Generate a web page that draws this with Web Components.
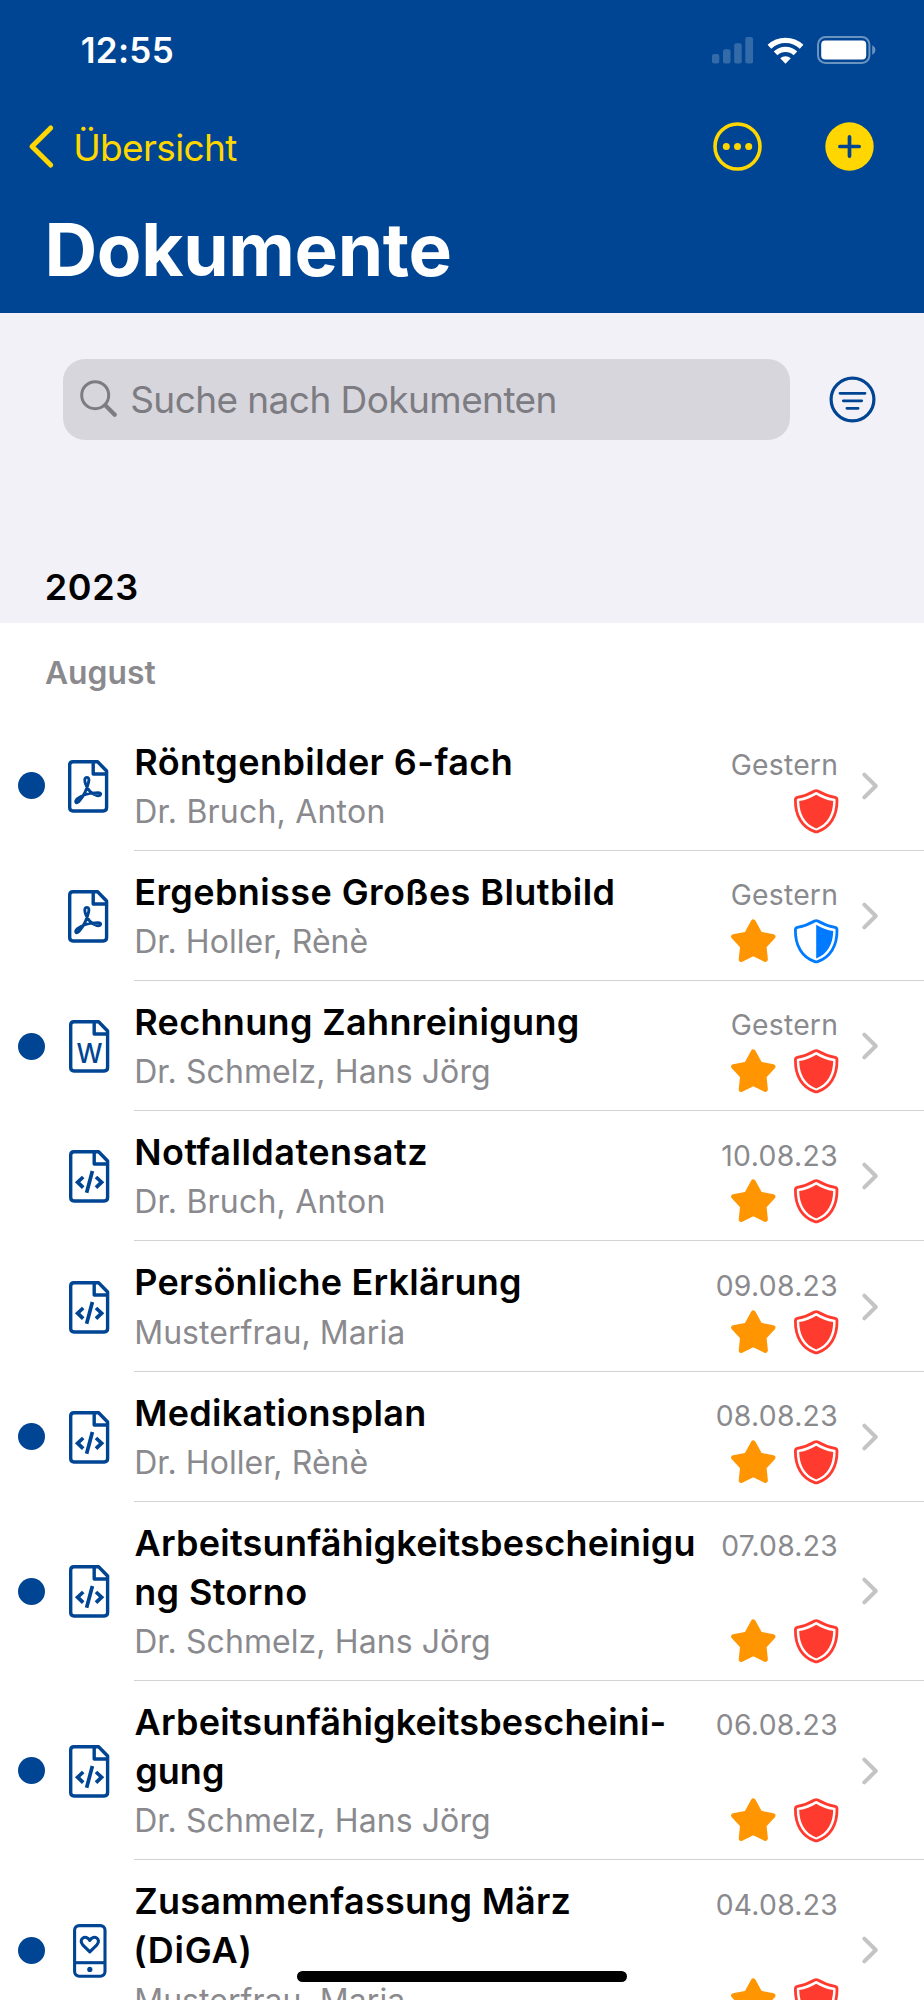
<!DOCTYPE html>
<html lang="de">
<head>
<meta charset="utf-8">
<title>Dokumente</title>
<style>
html,body{margin:0;height:2000px;overflow:hidden;background:#fff;font-family:Inter,"Liberation Sans",sans-serif}
</style>
</head>
<body>
<documents-app></documents-app>
<script>
/* Text whose box equals its visible ink: side bearings are trimmed and the
   tracking is chosen so that the ink spans the width given in "w". */
const canvas = document.createElement('canvas').getContext('2d');
class InkText extends HTMLElement {
  connectedCallback() {
    const size = +this.getAttribute('size'), weight = this.getAttribute('weight') || 400;
    const width = +this.getAttribute('w'), text = this.textContent;
    canvas.font = `${weight} ${size}px Inter, "Liberation Sans", sans-serif`;
    const m = canvas.measureText(text);
    const ink = m.actualBoundingBoxLeft + m.actualBoundingBoxRight;
    const track = width ? (width - ink) / (text.length - 1) : 0;
    const right = m.width - m.actualBoundingBoxRight + track;
    const left = text[0] === 'A' ? -1.6 : m.actualBoundingBoxLeft;
    this.attachShadow({mode: 'open'}).innerHTML = `<style>
      :host{display:block;width:max-content;white-space:pre;font-size:${size}px;font-weight:${weight};
        letter-spacing:${track.toFixed(3)}px;margin-left:${left.toFixed(2)}px;margin-right:${(-right).toFixed(2)}px}
      </style><slot></slot>`;
  }
}
customElements.define('ink-text', InkText);

const sheet = 'M5 1.7H29.6L38.6 11V47.6Q38.6 51 35.2 51H5Q1.7 51 1.7 47.6V5Q1.7 1.7 5 1.7ZM25.2 1.7V14H38.6';
const shieldEdge = 'M20.6 2Q22.2 1.1 23.8 2Q31.5 6.6 41 8.3Q43 8.8 43 10.8C43.3 27 36 38.6 23.6 42.6Q22.2 43.1 20.8 42.6C8.4 38.6 1.1 27 1.4 10.8Q1.4 8.8 3.4 8.3Q12.9 6.6 20.6 2Z';
const icons = {
  pdf: [41, 53, `<g fill="none" stroke="#004593" stroke-linejoin="round"><path stroke-width="3.4" d="${sheet}"/>
    <path stroke-width="2.9" d="M19 17.4C16 17.4 16.6 21 17.6 24C19.5 29.5 23.5 34 29 35.6C33.4 36.3 34 32.6 30 32.6C23 32.6 14.5 34.8 9.8 38.4C6 41.6 8.2 44.4 10.9 41.5C14.6 37.5 19 29 20.6 22.2C21.4 18.6 20.6 17.4 19 17.4Z"/></g>`],
  word: [41, 53, `<path fill="none" stroke="#004593" stroke-linejoin="round" stroke-width="3.4" d="${sheet}"/>
    <text x="20.4" y="43.2" text-anchor="middle" textLength="26" lengthAdjust="spacingAndGlyphs" font-family="Inter,sans-serif" font-size="26.5" font-weight="500" fill="#004593">W</text>`],
  code: [41, 53, `<g fill="none" stroke="#004593"><path stroke-linejoin="round" stroke-width="3.4" d="${sheet}"/>
    <path stroke-width="3.7" d="M14.2 27L8.6 32.2L14.2 37.6M27 27L32.6 32.2L27 37.6M23.4 21L17.6 42.8"/></g>`],
  phone: [34, 54, `<g fill="none" stroke="#004593" stroke-width="3.1"><rect x="1.6" y="1.6" width="30.4" height="50.6" rx="4.6"/><path d="M1.6 38.7H32"/>
    <path stroke-linejoin="round" d="M16.8 27.8L9.7 20.8C4.8 15.4 12.8 9.6 16.8 16.4C20.8 9.6 28.8 15.4 23.9 20.8Z"/></g><circle cx="16.8" cy="45.4" r="2.6" fill="#004593"/>`],
  star: [45, 44, `<path fill="#ff9500" stroke="#ff9500" stroke-width="5" stroke-linejoin="round" d="M22.3 2.9L29 15.1L42 17.6L33 27.3L34.4 40.4L22.3 34.6L10.2 40.4L11.6 27.3L2.6 17.6L15.6 15.1Z"/>`],
  shield: [45, 44.5, `<path fill="none" stroke="#ff3b30" stroke-width="2.8" d="${shieldEdge}"/><path fill="#ff3b30" d="M22.2 5.7Q30 10.5 39.2 12.1C39 25 33.5 35.4 22.2 39.4C10.9 35.4 5.4 25 5.2 12.1Q14.4 10.5 22.2 5.7Z"/>`],
  half: [45, 44.5, `<path fill="none" stroke="#007aff" stroke-width="2.8" d="${shieldEdge}"/><path fill="#007aff" d="M22.2 5.7Q30 10.5 39.2 12.1C39 25 33.5 35.4 22.2 39.4Z"/>`],
  chevron: [17, 28, `<path fill="none" stroke="#c4c4c6" stroke-width="4" stroke-linecap="round" stroke-linejoin="round" d="M2.3 2.6L13.8 14L2.3 25.4"/>`],
  back: [25, 43, `<path fill="none" stroke="#ffd600" stroke-width="5" stroke-linecap="round" stroke-linejoin="round" d="M21.7 3L3 21.5L21.7 40"/>`],
  more: [49, 49, `<circle cx="24.5" cy="24.5" r="22.5" fill="none" stroke="#ffd600" stroke-width="3.6"/><g fill="#ffd600"><circle cx="13.3" cy="24.5" r="3.5"/><circle cx="24.5" cy="24.5" r="3.5"/><circle cx="35.7" cy="24.5" r="3.5"/></g>`],
  plus: [49, 49, `<circle cx="24.5" cy="24.5" r="24.2" fill="#ffd600"/><path stroke="#004593" stroke-width="3.7" stroke-linecap="round" d="M14.9 24.5H34.1M24.5 14.9V34.1"/>`],
  filter: [47, 47, `<g fill="none" stroke="#004593"><circle cx="23.5" cy="23.5" r="21.4" stroke-width="3.2"/><path stroke-width="2.8" stroke-linecap="round" d="M11 17.3H36M14.3 24.8H32.7M17.9 32.3H29.1"/></g>`],
  search: [38, 38, `<g fill="none" stroke="#7c7c82"><circle cx="15.2" cy="15.2" r="13.5" stroke-width="3"/><path stroke-width="4.2" stroke-linecap="round" d="M25.3 25.3L34.7 34.7"/></g>`],
  signal: [42, 27, `<g fill="#fff" opacity=".2"><rect x="0" y="17" width="7.3" height="9.5" rx="2"/><rect x="11" y="12.2" width="7.5" height="14.3" rx="2"/><rect x="22.2" y="6.2" width="7.5" height="20.3" rx="2"/><rect x="33.3" y="0" width="7.7" height="26.5" rx="2"/></g>`],
  wifi: [37, 27, `<g fill="none" stroke="#fff" stroke-width="5.3"><path d="M2.4 9.8A23.6 23.6 0 0 1 34.6 9.8"/><path d="M8.6 16.3A14.4 14.4 0 0 1 28.4 16.3"/></g><path fill="#fff" d="M18.5 26.8L13.2 21.3A7.7 7.7 0 0 1 23.8 21.3Z"/>`],
  battery: [59, 28, `<g opacity=".42"><rect x="1" y="1" width="51.4" height="26" rx="7.5" fill="none" stroke="#fff" stroke-width="2"/><path fill="#fff" d="M55.2 9.3Q58.4 11 58.4 14T55.2 18.7Z"/></g><rect x="4.2" y="4.5" width="45" height="19" rx="4" fill="#fff"/>`]
};
class AppIcon extends HTMLElement {
  connectedCallback() {
    const [w, h, body] = icons[this.getAttribute('name')];
    this.attachShadow({mode: 'open'}).innerHTML = `<style>:host{display:block;flex:none;width:${w}px;height:${h}px}svg{display:block;overflow:visible}</style>
      <svg width="${w}" height="${h}" viewBox="0 0 ${w} ${h}">${body}</svg>`;
  }
}
customElements.define('app-icon', AppIcon);

class AppHeader extends HTMLElement {
  connectedCallback() {
    this.attachShadow({mode: 'open'}).innerHTML = `<style>
      :host{display:block;height:312.7px;background:#004593;color:#fff}
      div{display:flex;align-items:center;box-sizing:border-box}
      .status{height:100px;padding:0 47.6px 0 81.7px}
      .clock,.back{margin-right:auto}
      .status app-icon + app-icon{margin-left:13.2px}
      .nav{height:93px;padding:0 50.2px 0 28.8px;color:#ffd600}
      .back{gap:22.4px}
      .nav ink-text{padding-top:1px}
      .nav app-icon[name=plus]{margin-left:62.5px}
      .title{height:113px;padding-left:48.5px}
      </style>
      <div class="status"><span class="clock"><ink-text w="91" size="35" weight="600">12:55</ink-text></span><app-icon name="signal"></app-icon><app-icon name="wifi"></app-icon><app-icon name="battery"></app-icon></div>
      <div class="nav"><div class="back"><app-icon name="back"></app-icon><ink-text w="161" size="37">Übersicht</ink-text></div><app-icon name="more"></app-icon><app-icon name="plus"></app-icon></div>
      <div class="title"><ink-text w="401" size="73" weight="700">Dokumente</ink-text></div>`;
  }
}
customElements.define('app-header', AppHeader);

class SearchPanel extends HTMLElement {
  connectedCallback() {
    this.attachShadow({mode: 'open'}).innerHTML = `<style>
      :host{display:block;box-sizing:border-box;height:310px;padding:46.3px 48.5px 0 62.8px;background:#f2f1f7}
      .bar{display:flex;align-items:center;justify-content:space-between}
      .field{display:flex;align-items:center;box-sizing:border-box;width:727.4px;height:80.7px;border-radius:22px;background:#d7d6dc;color:#7c7c82;padding-left:17.2px;gap:14.2px}
      .year{margin:120px 0 0 -16px;line-height:54px;color:#000}
      </style>
      <div class="bar"><div class="field"><app-icon name="search"></app-icon><ink-text w="422.4" size="37">Suche nach Dokumenten</ink-text></div><app-icon name="filter"></app-icon></div>
      <div class="year"><ink-text w="90.4" size="36" weight="600">2023</ink-text></div>`;
  }
}
customElements.define('search-panel', SearchPanel);

class DocumentRow extends HTMLElement {
  connectedCallback() {
    const a = n => this.getAttribute(n);
    const badges = a('badges').split(' ').map(b => `<app-icon name="${b}"></app-icon>`).join('');
    this.attachShadow({mode: 'open'}).innerHTML = `<style>
      :host{display:flex}
      .lead{flex:none;display:flex;align-items:center;width:134px;box-sizing:border-box;padding-left:18px}
      .dot{width:27px;height:27px;border-radius:50%;background:${this.hasAttribute('unread') ? '#004593' : 'transparent'}}
      .kind{width:41px;margin-left:${a('icon') === 'pdf' ? 22.8 : 24}px;display:flex;justify-content:center;padding-top:1px}
      .body{flex:1;display:flex;border-bottom:1px solid #d3d3d6;box-sizing:border-box}
      .text{flex:1;padding:17px 0 13.1px 2.2px;color:#000}
      ::slotted([slot=title]){line-height:49.1px}
      ::slotted([slot=owner]){line-height:50px;color:#8a8a8e}
      .meta{display:flex;flex-direction:column;justify-content:space-between;align-items:flex-end;padding:25.3px 0 16.5px;color:#8a8a8e;line-height:38px}
      .date{padding-right:1.8px}
      .badges{display:flex;gap:18px;margin-right:-.8px}
      .go{align-self:center;margin:1px 45px 0 24px}
      </style>
      <div class="lead"><div class="dot"></div><div class="kind"><app-icon name="${a('icon')}"></app-icon></div></div>
      <div class="body"><div class="text"><slot name="title"></slot><slot name="owner"></slot></div>
      <div class="meta"><div class="date"><slot></slot></div><div class="badges">${badges}</div></div>
      <app-icon class="go" name="chevron"></app-icon></div>`;
  }
}
customElements.define('document-row', DocumentRow);

const owners = {'Dr. Bruch, Anton': 247.2, 'Dr. Holler, Rènè': 231.4, 'Dr. Schmelz, Hans Jörg': 352.8, 'Musterfrau, Maria': 267};
const documents = [
  ['pdf', 1, [['Röntgenbilder 6-fach', 374.6]], 'Dr. Bruch, Anton', 'Gestern', 104.5, 'shield'],
  ['pdf', 0, [['Ergebnisse Großes Blutbild', 477.3]], 'Dr. Holler, Rènè', 'Gestern', 104.5, 'star half'],
  ['word', 1, [['Rechnung Zahnreinigung', 441.6]], 'Dr. Schmelz, Hans Jörg', 'Gestern', 104.5, 'star shield'],
  ['code', 0, [['Notfalldatensatz', 290]], 'Dr. Bruch, Anton', '10.08.23', 114, 'star shield'],
  ['code', 0, [['Persönliche Erklärung', 383.8]], 'Musterfrau, Maria', '09.08.23', 119.5, 'star shield'],
  ['code', 1, [['Medikationsplan', 288]], 'Dr. Holler, Rènè', '08.08.23', 119.5, 'star shield'],
  ['code', 1, [['Arbeitsunfähigkeitsbescheinigu', 559], ['ng Storno', 170]], 'Dr. Schmelz, Hans Jörg', '07.08.23', 114, 'star shield'],
  ['code', 1, [['Arbeitsunfähigkeitsbescheini-', 530], ['gung', 86.7]], 'Dr. Schmelz, Hans Jörg', '06.08.23', 119.5, 'star shield'],
  ['phone', 1, [['Zusammenfassung März', 433.4], ['(DiGA)', 112.8]], 'Musterfrau, Maria', '04.08.23', 119.5, 'star shield']
];
class DocumentList extends HTMLElement {
  connectedCallback() {
    this.attachShadow({mode: 'open'}).innerHTML = `<style>
      :host{display:block;background:#fff}
      .month{height:98px;box-sizing:border-box;padding:24px 0 0 46.5px;line-height:51px;color:#8a8a8e}
      </style>
      <div class="month"><ink-text w="110.5" size="31.8" weight="600">August</ink-text></div>` +
      documents.map(([icon, unread, title, owner, date, dw, badges]) =>
        `<document-row icon="${icon}" ${unread ? 'unread' : ''} badges="${badges}">` +
        title.map(([t, w]) => `<ink-text slot="title" w="${w}" size="36" weight="600">${t}</ink-text>`).join('') +
        `<ink-text slot="owner" w="${owners[owner]}" size="32">${owner}</ink-text>` +
        `<ink-text w="${dw}" size="28.3">${date}</ink-text></document-row>`).join('');
  }
}
customElements.define('document-list', DocumentList);

class DocumentsApp extends HTMLElement {
  connectedCallback() {
    this.attachShadow({mode: 'open'}).innerHTML = `<style>
      :host{display:block;position:relative;width:924px;height:2000px;overflow:hidden}
      .home{position:absolute;left:297px;bottom:18px;width:330px;height:11.5px;border-radius:6px;background:#000}
      </style>
      <app-header></app-header><search-panel></search-panel><document-list></document-list><div class="home"></div>`;
  }
}
customElements.define('documents-app', DocumentsApp);
</script>
</body>
</html>
